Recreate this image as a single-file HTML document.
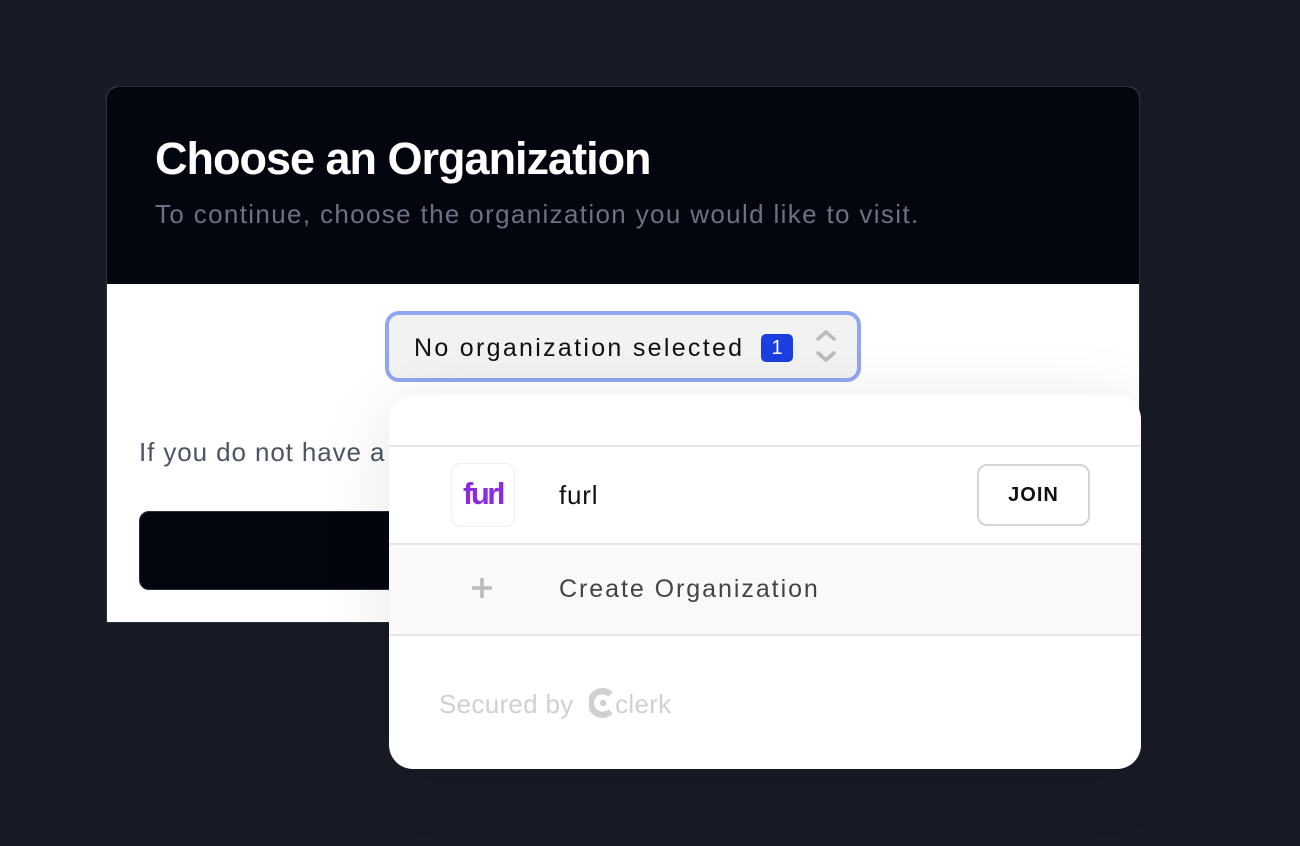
<!DOCTYPE html>
<html><head><style>
*{margin:0;padding:0;box-sizing:border-box}
body{width:1300px;height:846px;background:#181b26;font-family:"Liberation Sans",sans-serif;position:relative;overflow:hidden}
.card{position:absolute;left:106px;top:86px;width:1034px;height:537px;background:#fff;border:1px solid #2a2e38;border-radius:12px 12px 0 0;overflow:hidden}
.hdr{height:197px;background:#03060f;padding:46px 0 0 48px}
.hdr h1{color:#fff;font-size:45px;font-weight:bold;letter-spacing:-1px}
.hdr p{color:#6b7280;font-size:26px;letter-spacing:1.35px;margin-top:14px}
.sel{position:absolute;left:385px;top:311px;width:476px;height:71px;border:4px solid #92a6ee;border-radius:14px;background:#f2f2f2;font-size:25px;letter-spacing:2.3px;color:#111;padding:19px 0 0 25px}
.badge{position:absolute;left:372px;top:19px;width:32px;height:28px;background:#1d3ee0;border-radius:5px;color:#fff;font-size:20px;text-align:center;line-height:28px;letter-spacing:0}
.para{position:absolute;left:139px;top:437px;font-size:26px;letter-spacing:0.9px;color:#4b5563}
.btn{position:absolute;left:139px;top:511px;width:300px;height:79px;background:#03060f;border:1px solid #2a2e38;border-radius:10px}
.dd{position:absolute;left:389px;top:395px;width:752px;height:374px;background:#fff;border-radius:24px;box-shadow:0 10px 70px rgba(0,0,0,.1);overflow:hidden}
.line{position:absolute;left:0;right:0;height:2px;background:#e6e6e6}
.logo{position:absolute;left:62px;top:68px;width:64px;height:64px;border:1px solid #eee;border-radius:10px;color:#8a2be2;font-weight:bold;font-size:31px;text-align:center;line-height:60px;letter-spacing:-2.5px}
.join{position:absolute;left:588px;top:69px;width:113px;height:62px;border:2px solid #d4d4d4;border-radius:10px;text-align:center;line-height:58px;font-size:20px;font-weight:bold;letter-spacing:1px;color:#111}
</style></head><body>
<div class="card">
<div class="hdr"><h1>Choose an Organization</h1><p>To continue, choose the organization you would like to visit.</p></div>
</div>
<div class="para">If you do not have a</div>
<div class="btn"></div>
<div class="sel">No organization selected<div class="badge">1</div>
<svg style="position:absolute;left:426px;top:14px" width="22" height="34" viewBox="0 0 22 34"><path d="M3 10 L11 3 L19 10 M3 24 L11 31 L19 24" stroke="#bbb" stroke-width="3.5" fill="none" stroke-linecap="round" stroke-linejoin="round"/></svg>
</div>
<div class="dd">
<div class="line" style="top:50px"></div>
<div class="logo">furl</div>
<div style="position:absolute;left:170px;top:85px;font-size:26px;letter-spacing:0.8px;color:#111">furl</div>
<div class="join">JOIN</div>
<div class="line" style="top:148px"></div>
<div style="position:absolute;left:0;right:0;top:150px;height:89px;background:#f9f9f9"></div>
<svg style="position:absolute;left:82px;top:182px" width="22" height="22" viewBox="0 0 22 22"><path d="M11 1V21M1 11H21" stroke="#bbb" stroke-width="3.5"/></svg>
<div style="position:absolute;left:170px;top:180px;font-size:25px;color:#444;letter-spacing:1.95px">Create Organization</div>
<div class="line" style="top:239px"></div>
<div style="position:absolute;left:50px;top:293px;font-size:26px;color:#d0d0d0;letter-spacing:0.3px">Secured by
<svg style="vertical-align:-5px;margin-left:8px" width="26" height="30" viewBox="0 0 24 28"><path d="M20 6 A11 11 0 1 0 20 22" stroke="#d0d0d0" stroke-width="6" fill="none"/><circle cx="13" cy="14" r="3" fill="#d0d0d0"/></svg>clerk</div>
</div>
</body></html>
